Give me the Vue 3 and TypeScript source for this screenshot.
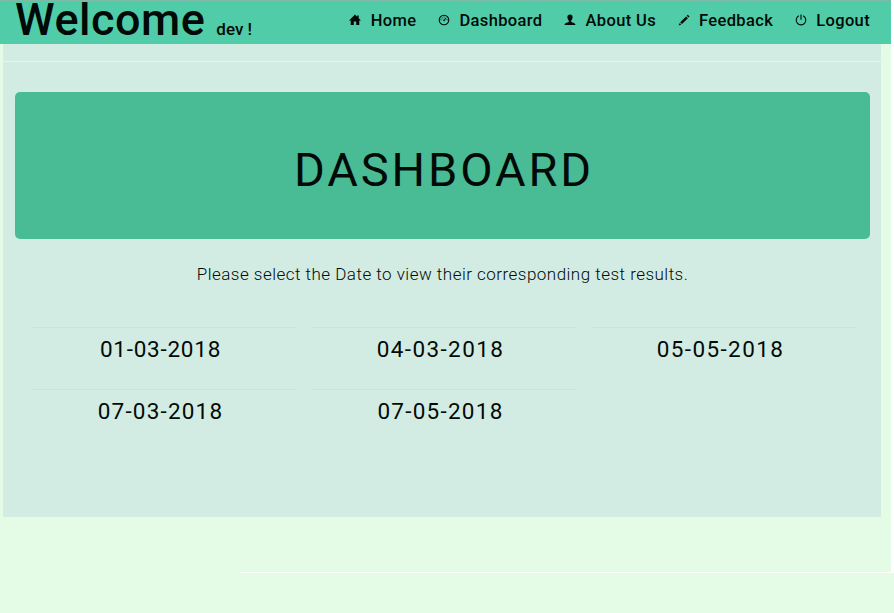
<script setup lang="ts">
interface NavLink { label: string; icon: string }
interface TestDate { label: string; tracking: number }

const links: NavLink[] = [
  { label: 'Home', icon: 'home' },
  { label: 'Dashboard', icon: 'gauge' },
  { label: 'About Us', icon: 'user' },
  { label: 'Feedback', icon: 'pencil' },
  { label: 'Logout', icon: 'power' },
]
const dates: TestDate[] = [
  { label: '01-03-2018', tracking: 0.75 },
  { label: '04-03-2018', tracking: 1.4 },
  { label: '05-05-2018', tracking: 1.4 },
  { label: '07-03-2018', tracking: 1.2 },
  { label: '07-05-2018', tracking: 1.25 },
]
</script>

<template>
  <div class="page">
    <div class="view">
      <header class="navbar">
        <div class="brand"><span class="welcome">Welcome</span><span class="name">dev !</span></div>
        <nav class="links">
          <a v-for="l in links" :key="l.label" class="link">
            <svg class="icon" viewBox="0 0 12 12">
              <path v-if="l.icon === 'home'" d="M6 .6 8.2 2.8V1.5h1.5v2.8L12 6.6h-1.7V11H7.2V7.5H4.8V11H1.7V6.6H0z" />
              <g v-else-if="l.icon === 'gauge'">
                <circle cx="6" cy="6" r="4.8" fill="none" stroke="currentColor" stroke-width="1.1" />
                <path d="M2.5 5.3h1v1h-1zM3.7 3.4h1v1h-1zM5.6 2.5h1v1h-1zM8.6 5.3h1v1h-1zM8 3.4l.5.5-1.7 2.3a.8.8 0 1 1-.8-.6z" />
              </g>
              <path v-else-if="l.icon === 'user'" d="M6 .5c1.7 0 2.7 1.1 2.6 2.7C8.5 4.8 7.9 6 7.2 6.6v1.3c1.8.7 4.3 1.1 4.3 3.1H.5c0-2 2.5-2.4 4.3-3.1V6.6C4.1 6 3.5 4.8 3.4 3.2 3.3 1.6 4.3.5 6 .5z" />
              <path v-else-if="l.icon === 'pencil'" d="M9.8.7 11.6 2.5 10.5 3.6 8.7 1.8zM8.1 2.4 9.9 4.2 4 10.1 2.2 8.3zM1.7 8.9 3.4 10.6.6 11.6z" />
              <path v-else d="M3.8 1.8a4.8 4.8 0 1 0 4.4 0M6 .5v5.3" fill="none" stroke="currentColor" stroke-width="1.1" />
            </svg>
            <span>{{ l.label }}</span>
          </a>
        </nav>
      </header>
      <main class="panel">
        <section class="banner"><h1>DASHBOARD</h1></section>
        <p class="hint">Please select the Date to view their corresponding test results.</p>
        <div class="grid">
          <div v-for="d in dates" :key="d.label" class="cell" :style="{ letterSpacing: d.tracking + 'px' }">{{ d.label }}</div>
        </div>
      </main>
    </div>
    <div class="rule"></div>
  </div>
</template>

<style>
body { margin: 0; background: #e4fbe6; }
</style>
<style scoped>
.page { height: 613px; font-family: Roboto, sans-serif; color: #020a07; background: #e4fbe6; }
.view { box-sizing: border-box; height: 572px; border-right: 3px solid #fff; }
.navbar { box-sizing: border-box; height: 44px; border-top: 1px solid #7dbba6; background: #50cda8; display: flex; justify-content: space-between; padding: 0 21px 0 15px; }
.brand { display: flex; align-items: baseline; height: 43px; gap: 11px; white-space: nowrap; }
.welcome { font-size: 45px; line-height: 37px; font-weight: 500; letter-spacing: 0.5px; }
.name { font-size: 17px; line-height: 20px; font-weight: 500; }
.links { display: flex; gap: 21.5px; height: 38px; align-items: center; font-size: 16.5px; font-weight: 500; letter-spacing: 0.36px; white-space: nowrap; }
.link { display: flex; align-items: center; gap: 9.5px; }
.icon { width: 12px; height: 12px; fill: currentColor; }
.panel { box-sizing: border-box; height: 473px; margin: 0 10px 0 3px; background: #d3ece3 linear-gradient(#e3f4ed, #e3f4ed) 0 17px / 100% 1px no-repeat; padding: 48px 11px 0 12px; }
.banner { box-sizing: border-box; height: 147px; padding: 8px 0 0 3px; border-radius: 5px; background: #49bb95; display: flex; justify-content: center; align-items: center; }
h1 { margin: 0; font-size: 47px; font-weight: 400; letter-spacing: 2.9px; }
.hint { margin: 25px 0 0; text-align: center; font-size: 17px; font-weight: 300; line-height: 20px; letter-spacing: 0.48px; }
.grid { display: grid; grid-template-columns: repeat(3, 265px); gap: 0 15px; padding: 43px 0 0 16px; }
.cell { box-sizing: border-box; height: 62px; border-top: 1px solid #cde2da; padding: 8px 6px 0 0; text-align: center; font-size: 22.5px; line-height: 27px; }
.rule { height: 1px; margin-left: 240px; background: #fff; }
</style>
